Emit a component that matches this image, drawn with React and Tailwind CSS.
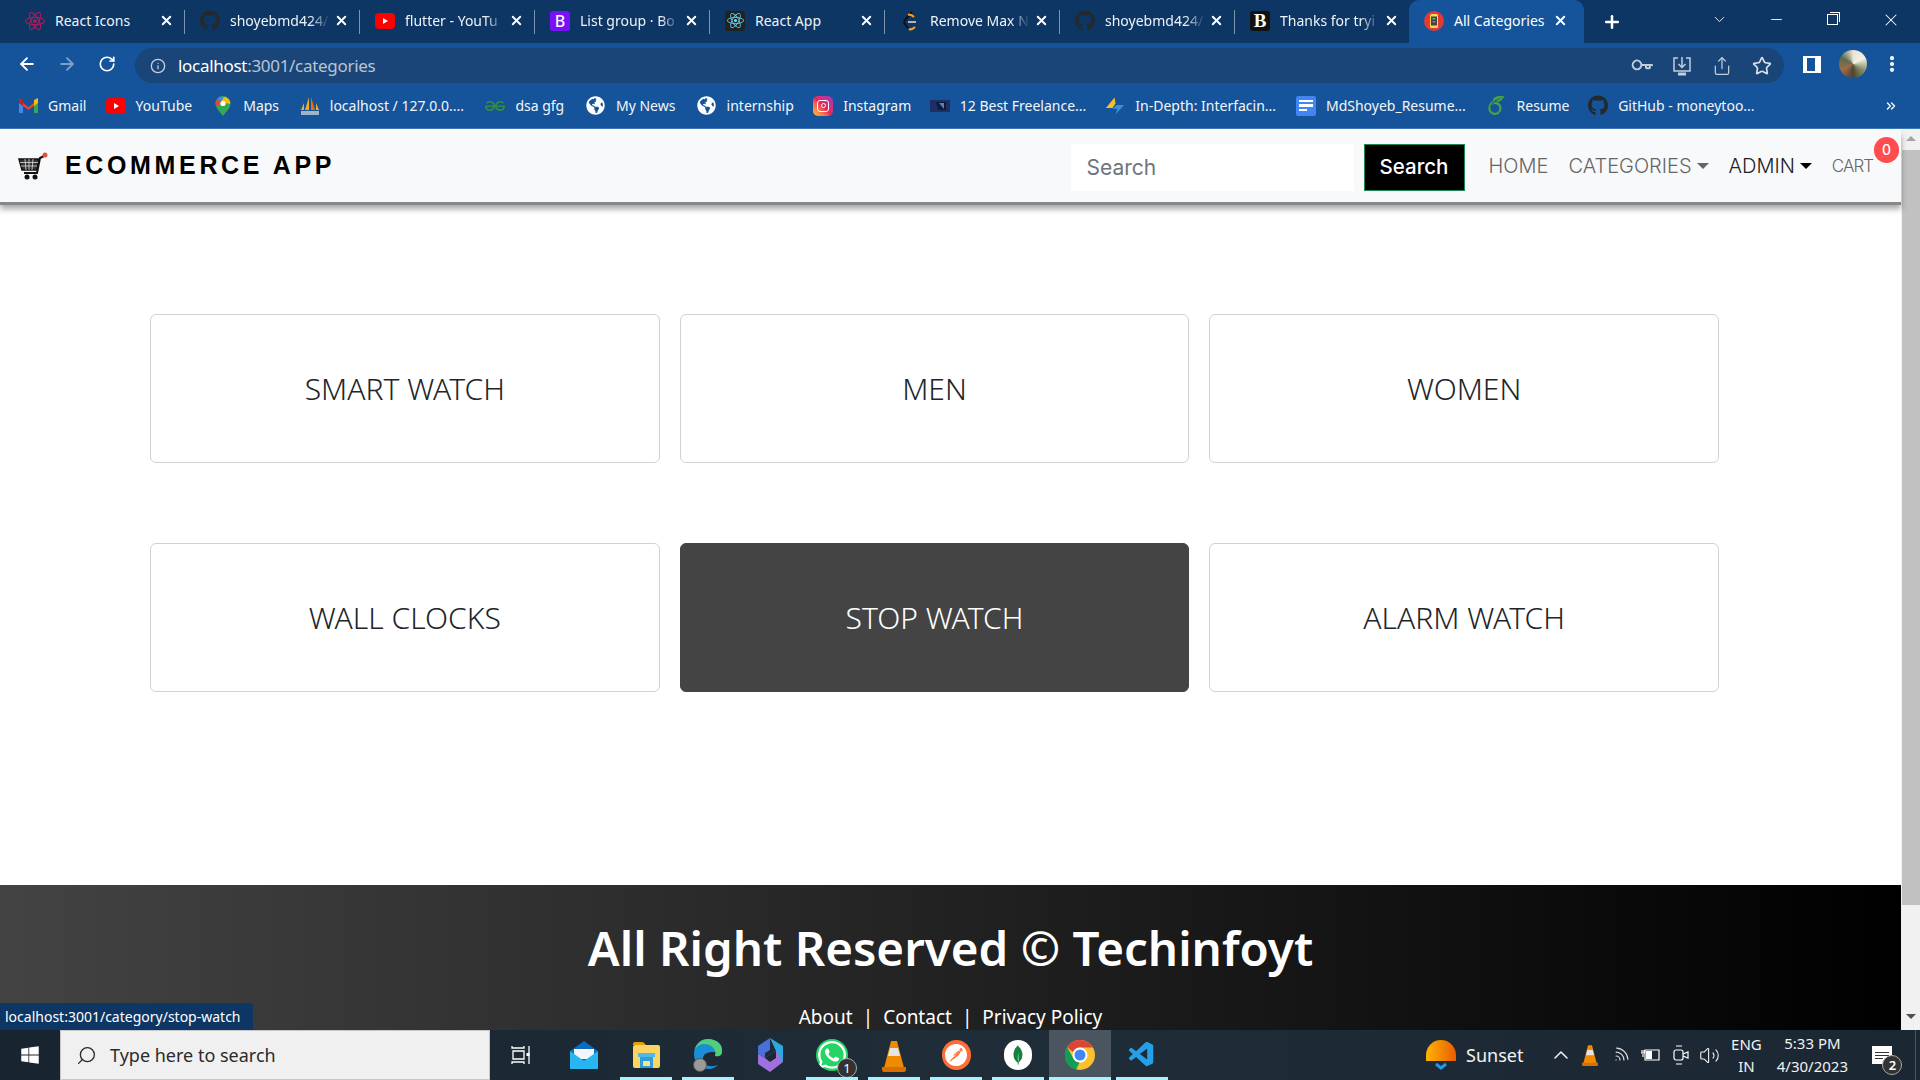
import { FaGithub, FaGlobeAmericas, FaWindows, FaWhatsapp } from 'react-icons/fa'
import { SiReact, SiPostman, SiMongodb, SiOverleaf, SiGeeksforgeeks } from 'react-icons/si'
import { VscVscode } from 'react-icons/vsc'
import {
  ArrowLeft, ArrowRight, RotateCw, Info, Key, Share, Star, X, Plus, Minus, ChevronDown, ChevronUp,
  ChevronsRight, MoreVertical, Search as SearchIcon, Wifi, Volume2,
} from 'lucide-react'

const YouTube = ({ size = 20 }) => (
  <svg width={size} height={size} viewBox="0 0 20 20">
    <rect x="0" y="2" width="20" height="16" rx="4" fill="#f00" />
    <path d="M8 7l5 3-5 3z" fill="#fff" />
  </svg>
)

const Leetcode = () => (
  <svg width="20" height="20" viewBox="0 0 20 20" fill="none" strokeWidth="2">
    <path d="M12 1L5 9c-1 1-1 3 0 4l3 4" stroke="#111" />
    <path d="M9 18c2 1 4 0 6-2" stroke="#f89f1b" />
    <path d="M8 4c2-1 4 0 6 2" stroke="#f89f1b" />
    <path d="M8 11h8" stroke="#b3b3b3" />
  </svg>
)

const WatchFav = () => (
  <svg width="20" height="20" viewBox="0 0 20 20">
    <circle cx="10" cy="10" r="10" fill="#e53935" />
    <rect x="6" y="3" width="8" height="14" rx="1.5" fill="#ffd54f" />
    <rect x="7" y="5.5" width="6" height="9" fill="#37474f" />
    <rect x="8.5" y="7" width="3" height="1.5" fill="#66bb6a" />
    <rect x="8.5" y="10" width="3" height="1.5" fill="#ef5350" />
  </svg>
)

const tabs = [
  { label: 'React Icons', icon: <SiReact size={20} color="#c2185b" />, clip: false },
  { label: 'shoyebmd424/', icon: <FaGithub size={21} color="#24292e" />, clip: true },
  { label: 'flutter - YouTu', icon: <YouTube />, clip: true },
  {
    label: 'List group · Bo',
    icon: <span className="w-5 h-5 rounded-[3px] bg-[#7a10f7] text-white text-[16px] leading-5 text-center font-medium">B</span>,
    clip: true,
  },
  {
    label: 'React App',
    icon: <span className="w-5 h-5 rounded-[3px] bg-[#222] flex items-center justify-center"><SiReact size={17} color="#61dafb" /></span>,
    clip: false,
  },
  { label: 'Remove Max N', icon: <Leetcode />, clip: true },
  { label: 'shoyebmd424/', icon: <FaGithub size={21} color="#24292e" />, clip: true },
  {
    label: 'Thanks for tryi',
    icon: <span className="w-5 h-5 rounded-[3px] bg-[#111] text-white text-[19px] leading-5 text-center font-bold font-['Liberation_Serif',serif]">B</span>,
    clip: true,
  },
]

const Gmail = () => (
  <svg width="19" height="15" viewBox="0 0 19 15">
    <path d="M0 3v12h4V6z" fill="#4285f4" />
    <path d="M19 3v12h-4V6z" fill="#34a853" />
    <path d="M0 2l9.5 7L19 2v3l-9.5 7L0 5z" fill="#ea4335" />
    <path d="M15 2l4-2v5l-4 3z" fill="#fbbc04" />
    <path d="M0 0l4 2v6L0 5z" fill="#c5221f" />
  </svg>
)

const MapsPin = () => (
  <svg width="16" height="20" viewBox="0 0 16 20">
    <path d="M8 0a7.5 7.5 0 0 0-7.5 7.5C.5 12 5 16 8 20c3-4 7.5-8 7.5-12.500A7.500 7.500 0 0 0 8 0z" fill="#34a853" />
    <path d="M2 3l4 3 3-5a7 7 0 0 0-7 2z" fill="#4285f4" />
    <path d="M9 1l-3 5 9 2c1-3-2-7-6-7z" fill="#fbbc04" />
    <path d="M.5 7.500 2 3l4 3-4 5z" fill="#ea4335" />
    <circle cx="8" cy="7.500" r="2.600" fill="#fff" />
  </svg>
)

const Pma = () => (
  <svg width="20" height="20" viewBox="0 0 20 20">
    <path d="M5 14L9 1v13z" fill="#f9a825" />
    <path d="M11 14V1l4 13z" fill="#ef6c00" />
    <path d="M1 14l3-7v7zM19 14l-3-7v7z" fill="#f9a825" />
    <rect x="1" y="15" width="18" height="4" fill="#9fb4c8" />
  </svg>
)

const Instagram = () => (
  <span className="w-5 h-5 rounded-[5px] bg-gradient-to-tr from-[#fdc30d] via-[#e8235a] to-[#9d27c5] flex items-center justify-center">
    <span className="w-3 h-3 rounded-[3px] border-[1.500px] border-white flex items-center justify-center">
      <span className="w-[5px] h-[5px] rounded-full border border-white" />
    </span>
  </span>
)

const Freelance = () => (
  <svg width="20" height="14" viewBox="0 0 20 14">
    <rect x="0" y="1" width="20" height="12" fill="#1d2f66" />
    <path d="M6 3h10v8H8z" fill="#0f1d33" />
    <path d="M9 4l5 6V4z" fill="#5a7bd6" />
  </svg>
)

const Bolt = () => (
  <svg width="21" height="20" viewBox="0 0 21 20">
    <path d="M10 1L1 12h7l3-5z" fill="#f9bd25" />
    <path d="M12 9h8l-9 10 2-6H8z" fill="#3a8fd8" />
  </svg>
)

const Doc = () => (
  <span className="w-5 h-5 rounded-[2px] bg-[#4285f4] flex flex-col justify-center gap-[2px] px-[3px]">
    <span className="h-[2.500px] bg-white" />
    <span className="h-[2.500px] bg-white" />
    <span className="h-[2.500px] w-2 bg-white" />
  </span>
)

const bookmarks = [
  { label: 'Gmail', icon: <Gmail />, w: 'w-[37px]' },
  { label: 'YouTube', icon: <YouTube />, w: 'w-[57px]' },
  { label: 'Maps', icon: <MapsPin />, w: 'w-[36px]' },
  { label: 'localhost / 127.0.0....', icon: <Pma />, w: 'w-[135px]' },
  { label: 'dsa gfg', icon: <SiGeeksforgeeks size={20} color="#2f8d46" />, w: 'w-[50px]' },
  { label: 'My News', icon: <FaGlobeAmericas size={19} color="#fff" />, w: 'w-[60px]' },
  { label: 'internship', icon: <FaGlobeAmericas size={19} color="#fff" />, w: 'w-[66px]' },
  { label: 'Instagram', icon: <Instagram />, w: 'w-[66px]' },
  { label: '12 Best Freelance...', icon: <Freelance />, w: 'w-[125px]' },
  { label: 'In-Depth: Interfacin...', icon: <Bolt />, w: 'w-[140px]' },
  { label: 'MdShoyeb_Resume...', icon: <Doc />, w: 'w-[140px]' },
  { label: 'Resume', icon: <SiOverleaf size={19} color="#47a141" />, w: 'w-[51px]' },
  { label: 'GitHub - moneytoo...', icon: <FaGithub size={21} color="#24292e" />, w: 'w-[140px]' },
]

const categories = ['SMART WATCH', 'MEN', 'WOMEN', 'WALL CLOCKS', 'STOP WATCH', 'ALARM WATCH']

const CartLogo = () => (
  <svg width="30" height="28" viewBox="0 0 30 28" fill="none">
    <path d="M26 4l-4 2-3 15H6" stroke="#111" strokeWidth="2" />
    <path d="M1 7h20l-2 11H4z" fill="#333" stroke="#111" strokeWidth="1.500" />
    <path d="M2 10.500h18M3 14h16M7 7l1 11M11 7v11M15 7l-1 11" stroke="#ddd" strokeWidth="0.800" />
    <circle cx="27" cy="3" r="2.500" fill="#e0523f" />
    <circle cx="9" cy="25" r="2.500" fill="#111" />
    <circle cx="17" cy="25" r="2.500" fill="#111" />
  </svg>
)

const Caret = ({ color }) => (
  <span className={`w-0 h-0 border-x-[6px] border-x-transparent border-t-[6px] ml-[5px] ${color}`} />
)

const Mail = () => (
  <svg width="28" height="28" viewBox="0 0 28 28">
    <path d="M0 10L14 0l14 10v18H0z" fill="#0f6cbd" />
    <path d="M4 8h20v10H4z" fill="#f3f7fb" />
    <path d="M0 10l14 10 14-10v18H0z" fill="#28b6f0" />
  </svg>
)

const Folder = () => (
  <svg width="27" height="26" viewBox="0 0 27 26">
    <path d="M0 2a2 2 0 0 1 2-2h8l3 3H0z" fill="#e2a10c" />
    <rect y="3" width="27" height="23" rx="2" fill="#fcd462" />
    <rect x="7" y="13" width="13" height="13" fill="#2f9fdc" />
    <rect x="10" y="19" width="7" height="5" fill="#ffe082" />
    <rect x="5" y="11" width="17" height="4" fill="#4fb8ec" />
  </svg>
)

const Edge = () => (
  <span className="relative w-[30px] h-[34px] block">
    <svg width="30" height="32" viewBox="0 0 30 32">
      <path d="M15 1C7 1 1 7 1 16c0 8 6 15 14 15 5 0 8-2 10-4-8 3-15 0-15-6 0-5 4-7 10-7h9c1-8-6-13-14-13z" fill="#1a8fd6" />
      <path d="M15 1c8 0 15 5 14 13 0 4-4 5-7 4 2-6-3-12-11-12-4 0-7 2-9 5 2-6 7-10 13-10z" fill="#4fce7b" />
    </svg>
    <span className="absolute left-0 bottom-0 w-[14px] h-[14px] rounded-full bg-[#9a9a9a] border border-[#555]" />
  </span>
)

const Copilot = () => (
  <svg width="27" height="34" viewBox="0 0 27 34">
    <path d="M1 8l12-8v12l-5 3v5l-7-4z" fill="#4a6fd8" />
    <path d="M13 0l13 8v16l-7-4v-7z" fill="#2fa6de" />
    <path d="M1 16l7 4 11-7 7 11-13 10-12-8z" fill="#a070e0" />
    <path d="M8 20l11-7v7l-6 4z" fill="#1b2733" />
  </svg>
)

const Cone = ({ w = 24, h = 33 }) => (
  <svg width={w} height={h} viewBox="0 0 24 33">
    <path d="M9 2h6l7 27H2z" fill="#f08a00" />
    <path d="M8 9h8l2 8H6z" fill="#e4e4e4" />
    <path d="M0 28h24v3a2 2 0 0 1-2 2H2a2 2 0 0 1-2-2z" fill="#d86f00" />
  </svg>
)

const Chrome = () => (
  <svg width="30" height="30" viewBox="0 0 30 30">
    <circle cx="15" cy="15" r="15" fill="#fbc02d" />
    <path d="M15 0a15 15 0 0 1 13 7.500H15a7.500 7.500 0 0 0-7 4.500L2 7a15 15 0 0 1 13-7z" fill="#db4437" />
    <path d="M2 7l6.500 11.500a7.500 7.500 0 0 0 6 4L11 29.500A15 15 0 0 1 2 7z" fill="#0f9d58" />
    <circle cx="15" cy="15" r="7.500" fill="#fff" />
    <circle cx="15" cy="15" r="5.500" fill="#4285f4" />
  </svg>
)

const docked = [
  { icon: <Mail />, on: false },
  { icon: <Folder />, on: true },
  { icon: <Edge />, on: true },
  { icon: <Copilot />, on: false },
  {
    icon: (
      <span className="relative block">
        <FaWhatsapp size={32} color="#fff" className="bg-[#25d366] rounded-full" />
        <span className="absolute -right-[9px] -bottom-[7px] w-5 h-5 rounded-full bg-[#333] border border-[#aaa] text-white text-[13px] leading-[18px] text-center">1</span>
      </span>
    ),
    on: true,
  },
  { icon: <Cone />, on: true },
  {
    icon: <span className="w-[29px] h-[30px] rounded-full bg-[#ff6c37] flex items-center justify-center"><SiPostman size={22} color="#fff" /></span>,
    on: true,
  },
  {
    icon: <span className="w-[28px] h-[30px] rounded-full bg-white flex items-center justify-center"><SiMongodb size={20} color="#13823f" /></span>,
    on: true,
  },
  { icon: <Chrome />, on: true, active: true },
  { icon: <VscVscode size={30} color="#23a0e8" />, on: true },
]

const App = () => {
  return (
    <div className="w-[1920px] h-[1080px] overflow-hidden flex flex-col font-['Noto_Sans',sans-serif]">
      {/* tab strip */}
      <div className="h-[43px] shrink-0 bg-[#0d3664] flex pl-[10px] text-white text-[14px] items-stretch">
        {tabs.map((t, i) => (
          <div key={i} className="w-[175px] flex items-center pl-[15px] pb-[2px] relative">
            <span className="w-5 flex justify-center shrink-0">{t.icon}</span>
            <span className={`ml-[10px] w-[100px] whitespace-nowrap overflow-hidden text-[#eef3f8] ${t.clip ? '[mask-image:linear-gradient(to_right,black_80%,transparent)]' : ''}`}>
              {t.label}
            </span>
            <X size={15} strokeWidth={3} className="ml-[4px] shrink-0" />
            {i < 7 && <span className="absolute right-0 top-[10px] h-[24px] w-px bg-[#7f95ad]" />}
          </div>
        ))}
        <div className="w-[175px] rounded-t-[10px] bg-[#15549a] flex items-center pl-[15px] pb-[2px] -ml-px">
          <WatchFav />
          <span className="ml-[10px] w-[95px] whitespace-nowrap">All Categories</span>
          <X size={15} strokeWidth={3} className="ml-[4px]" />
        </div>
        <Plus size={20} strokeWidth={3} className="self-center ml-[18px]" />
        <ChevronDown size={17} strokeWidth={1.250} className="self-center ml-[89px] -mt-[4px]" />
        <Minus size={17} strokeWidth={1.250} className="self-center ml-[40px] -mt-[4px]" />
        <span className="self-center ml-[42px] -mt-[4px] w-[11px] h-[11px] border border-white relative">
          <span className="absolute -top-[3px] -right-[3px] w-[10px] h-[10px] border-t border-r border-white" />
        </span>
        <X size={20} strokeWidth={1.250} className="self-center ml-[43px] -mt-[4px]" />
      </div>

      {/* address bar */}
      <div className="h-[42px] shrink-0 bg-[#15549a] flex items-center text-white">
        <ArrowLeft size={20} strokeWidth={2.250} className="ml-[17px]" />
        <ArrowRight size={20} strokeWidth={2.250} color="#7f9fc6" className="ml-[20px]" />
        <RotateCw size={18} strokeWidth={2.250} className="ml-[21px]" />
        <div className="ml-[19px] w-[1649px] h-[35px] self-start mt-[5px] rounded-full bg-[#1a4578] flex items-center pl-[15px] pr-[12px]">
          <Info size={16} color="#c3cedb" />
          <span className="ml-[12px] text-[17px] tracking-[-0.300px]">
            localhost<span className="text-[#b8c4d4]">:3001/categories</span>
          </span>
          <Key size={19} color="#c3cedb" strokeWidth={2.500} className="ml-auto rotate-[45deg]" />
          <svg width="22" height="22" viewBox="0 0 22 22" fill="none" stroke="#c3cedb" strokeWidth="1.500" className="ml-[20px]">
            <path d="M7 3H3v13h16V3h-4M11 2v10M7.500 9l3.500 3.500L14.500 9" />
            <path d="M7 19h8" strokeWidth="3" />
          </svg>
          <Share size={20} color="#c3cedb" strokeWidth={1.500} className="ml-[19px]" />
          <Star size={20} color="#d9e1ea" strokeWidth={2} className="ml-[20px]" />
        </div>
        <span className="ml-[19px] w-[18px] h-[17px] bg-white border-x-[4px] border-y-[2px] border-white relative">
          <span className="block w-[8px] h-[13px] bg-[#15549a]" />
        </span>
        <span className="ml-[18px] w-[28px] h-[28px] rounded-full bg-[conic-gradient(#e8e2d0,#f4f1e6,#8a8f6a,#4a4436,#a06a4a,#5c6b4a,#e8e2d0)]" />
        <MoreVertical size={20} strokeWidth={3} className="ml-[15px]" />
      </div>

      {/* bookmarks */}
      <div className="h-[44px] shrink-0 bg-[#15549a] border-b border-[#3a78b8] flex items-center pl-[18px] pb-[2px] gap-[20.600px] text-[14px] text-[#f2f6fa] relative">
        {bookmarks.map((b, i) => (
          <div key={i} className="flex items-center gap-[10px]">
            <span className="w-5 flex justify-center">{b.icon}</span>
            <span className={`${b.w} whitespace-nowrap`}>{b.label}</span>
          </div>
        ))}
        <ChevronsRight size={14} strokeWidth={2.500} className="absolute left-[1884px] top-[14px]" />
      </div>

      {/* page */}
      <div className="h-[901px] shrink-0 flex relative overflow-hidden">
        <div className="w-[1901px] shrink-0 flex flex-col bg-white">
          <nav className="h-[73px] shrink-0 relative z-10 bg-[#f8f9fa] shadow-[0_3px_0_#888,0_7px_6px_rgba(0,0,0,0.35)] flex items-center pl-[18px] font-['Inter',sans-serif]">
            <CartLogo />
            <span className="ml-[17px] text-[25px] font-bold tracking-[3.650px] text-black font-['Liberation_Sans',sans-serif]">
              ECOMMERCE APP
            </span>
            <input
              placeholder="Search"
              className="ml-auto mt-1 w-[283px] h-[47px] bg-white pl-4 text-[21px] font-normal placeholder:text-[#6c757d] outline-none"
            />
            <button className="ml-[10px] mt-1 w-[101px] h-[47px] bg-black border border-[#198754] text-white text-[20.500px] font-medium">
              Search
            </button>
            <div className="ml-[24px] flex items-center text-[20px] font-light text-[#666]">
              <span>HOME</span>
              <span className="ml-[20px]">CATEGORIES</span>
              <Caret color="border-t-[#666]" />
              <span className="ml-[20px] text-[#222]">ADMIN</span>
              <Caret color="border-t-black" />
              <span className="ml-[20px] text-[17px] tracking-[-1px] mt-[2px]">CART</span>
            </div>
            <span className="absolute left-[1874px] top-[8px] w-[25px] h-[26px] rounded-full bg-[#ff4d4f] text-white text-[14px] font-medium leading-[26px] text-center">
              0
            </span>
            <span className="w-[28px]" />
          </nav>

          <main className="h-[683px] shrink-0 pt-[112px] pl-[150px]">
            <div className="w-[1569px] grid grid-cols-3 gap-x-5 gap-y-20">
              {categories.map((c) => (
                <div
                  key={c}
                  className={`h-[149px] rounded-[6px] border flex items-center justify-center text-[30px] font-light ${c === 'STOP WATCH' ? 'bg-[#444] border-[#444] text-white' : 'bg-white border-[#d2d2d2] text-[#212529]'}`}
                >
                  {c}
                </div>
              ))}
            </div>
          </main>

          <footer className="h-[145px] shrink-0 bg-linear-to-r/srgb from-[#434343] to-black text-white text-center">
            <h1 className="mt-[25px] text-[47.500px] leading-[76px] font-semibold">All Right Reserved © Techinfoyt</h1>
            <p className="mt-[18px] text-[19px] leading-[27px]">
              About<span className="mx-[10px]">|</span>Contact<span className="mx-[10px]">|</span>Privacy Policy
            </p>
          </footer>
        </div>

        {/* scrollbar */}
        <div className="flex-1 bg-[#f1f1f1] flex flex-col items-center">
          <span className="mt-[7px] w-0 h-0 border-x-[5px] border-x-transparent border-b-[5px] border-b-[#a3a3a3]" />
          <span className="mt-[9px] w-[18px] h-[755px] bg-[#c1c1c1]" />
          <span className="mt-[109px] w-0 h-0 border-x-[5px] border-x-transparent border-t-[5px] border-t-[#505050]" />
        </div>

        <div className="absolute left-0 bottom-0 w-[253px] h-[27px] bg-[#0d3664] rounded-tr-[4px] pl-[5px] text-[14px] leading-[27px] text-white whitespace-nowrap">
          localhost:3001/category/stop-watch
        </div>
      </div>

      {/* windows taskbar */}
      <div className="h-[50px] shrink-0 bg-linear-to-r/srgb from-[#18242f] via-[#1f2d38] to-[#1b2733] flex items-center text-[#f2f2f2]">
        <FaWindows size={20} color="#fff" className="ml-[20px]" />
        <div className="ml-[20px] w-[430px] h-full bg-[#f0f0f0] border border-[#c8c8c8] flex items-center pl-[15px] text-[#2b2b2b] text-[18px]">
          <SearchIcon size={21} strokeWidth={1.500} className="-scale-x-100" />
          <span className="ml-[13px]">Type here to search</span>
        </div>
        <div className="w-[62px] flex justify-center">
          <svg width="20" height="20" viewBox="0 0 20 20" fill="none" stroke="#fff" strokeWidth="1.300">
            <path d="M1 1v2h12V1M1 19v-2h12v2M2 6h11v8H2zM18 1v18" />
            <rect x="15.500" y="8" width="3" height="3" fill="#fff" stroke="none" />
          </svg>
        </div>
        <div className="flex h-full ml-[1px]">
          {docked.map((d, i) => (
            <div key={i} className={`w-[62px] h-full relative flex items-center justify-center ${d.active ? 'bg-[#4a5560]' : ''}`}>
              {d.icon}
              {d.on && <span className={`absolute bottom-0 h-[3px] bg-[#a5f3fc] ${d.active ? 'inset-x-0' : 'inset-x-[5px]'}`} />}
            </div>
          ))}
        </div>

        <svg width="30" height="30" viewBox="0 0 30 30" className="ml-[253px]">
          <defs>
            <linearGradient id="sun" x1="0" x2="1" y1="0" y2="0">
              <stop offset="0" stopColor="#ffb400" />
              <stop offset="1" stopColor="#e85d00" />
            </linearGradient>
          </defs>
          <path d="M0 21v-6a15 15 0 0 1 30 0v6z" fill="url(#sun)" />
          <path d="M10 24l5 4 5-4" stroke="#1d9be8" strokeWidth="3" fill="none" />
        </svg>
        <span className="ml-[10px] text-[18px]">Sunset</span>
        <ChevronUp size={24} strokeWidth={1.500} className="ml-[26px]" />
        <span className="ml-[8px]"><Cone w={18} h={22} /></span>
        <Wifi size={19} strokeWidth={1.500} color="#ddd" className="ml-[12px] rotate-45" />
        <svg width="20" height="14" viewBox="0 0 20 14" fill="none" stroke="#fff" className="ml-[11px]">
          <path d="M4 2h14v10H4zM0 5h4M1 2v3M3 2v3M2 6v3" strokeWidth="1.200" />
          <rect x="5" y="3" width="6" height="8" fill="#fff" stroke="none" />
        </svg>
        <svg width="16" height="20" viewBox="0 0 16 20" fill="none" stroke="#fff" strokeWidth="1.200" className="ml-[12px]">
          <rect x="1" y="5" width="9" height="10" rx="2" />
          <path d="M10 9l5-2v6l-5-2M3 1h6M3 19h6" />
        </svg>
        <Volume2 size={21} strokeWidth={1.250} className="ml-[10px]" />
        <div className="ml-[12px] w-[28px] text-[15px] leading-[22px] flex flex-col items-center">
          <span>ENG</span>
          <span>IN</span>
        </div>
        <div className="ml-[16px] w-[72px] text-[15px] leading-[23px] flex flex-col items-center whitespace-nowrap">
          <span>5:33 PM</span>
          <span>4/30/2023</span>
        </div>
        <div className="ml-[24px] relative w-[20px] h-[18px] bg-white flex flex-col gap-[2px] justify-center px-[3px]">
          <span className="h-px bg-[#333]" />
          <span className="h-px bg-[#333]" />
          <span className="h-px bg-[#333] w-2" />
          <span className="absolute -right-[10px] -bottom-[11px] w-[20px] h-[20px] rounded-full bg-[#333] border border-[#aaa] text-white text-[13px] font-semibold leading-[18px] text-center">2</span>
        </div>
        <span className="ml-auto mr-[4px] w-px h-full bg-[#4a5560]" />
      </div>
    </div>
  )
}

export default App
